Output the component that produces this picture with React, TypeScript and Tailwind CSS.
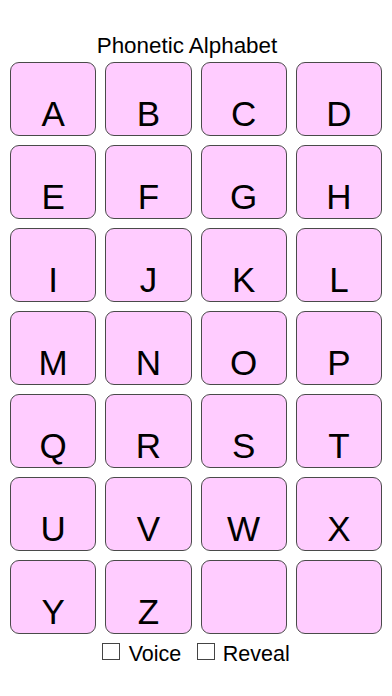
import React from "react";

const letters = [
  "A","B","C","D","E","F","G","H","I","J","K","L","M","N","O","P","Q","R","S","T","U","V","W","X","Y","Z","","",
];

export default function App() {
  return (
    <div
      className="w-[392px] h-[696px] bg-white text-black overflow-hidden"
      style={{ fontFamily: '"Liberation Sans", Arial, Helvetica, sans-serif' }}
    >
      <div className="h-[61.5px] pt-[33px] pr-[18px] text-center text-[22.4px] leading-[26px]">
        Phonetic Alphabet
      </div>
      <div className="grid grid-cols-4 gap-x-[9px] gap-y-[9px] px-[10px]">
        {letters.map((l, i) => (
          <div
            key={i}
            className="h-[74px] rounded-[9px] border border-[#4a4a4a] bg-[#ffccff] flex items-end justify-center pb-[3.5px] text-[35px] leading-[35px]"
          >
            {l}
          </div>
        ))}
      </div>
      <div className="mt-[8px] flex justify-center items-start text-[21.5px] leading-[24px]">
        <div className="flex items-start">
          <div className="mt-[1px] w-[17.5px] h-[17.5px] border border-[#444] bg-white" />
          <span className="ml-[9px]">Voice</span>
        </div>
        <div className="flex items-start ml-[16px]">
          <div className="mt-[1px] w-[17.5px] h-[17.5px] border border-[#444] bg-white" />
          <span className="ml-[8px]">Reveal</span>
        </div>
      </div>
    </div>
  );
}
